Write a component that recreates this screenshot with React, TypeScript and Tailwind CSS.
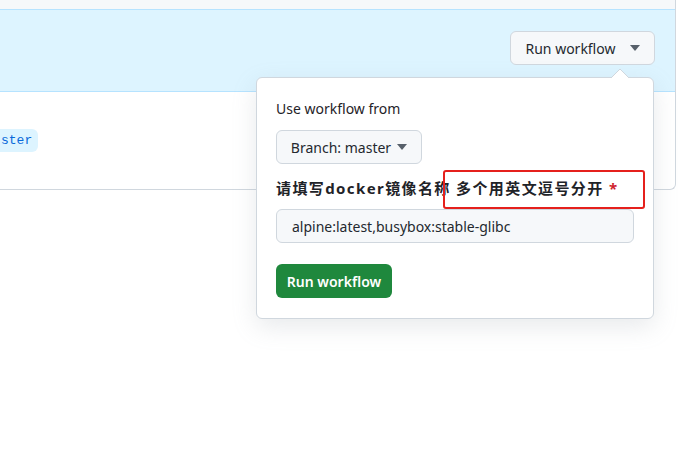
import { useState } from "react";

const font = { fontFamily: '"Noto Sans", "Noto Sans CJK SC", sans-serif' };

function Caret({ className }: { className?: string }) {
  return (
    <svg width="10" height="6" viewBox="0 0 10 6" className={className}>
      <path d="M0 0h10L5 6z" fill="currentColor" />
    </svg>
  );
}

export default function App() {
  const [images, setImages] = useState("alpine:latest,busybox:stable-glibc");

  return (
    <div className="relative w-[686px] h-[453px] bg-white overflow-hidden text-[#1f2328]" style={font}>
      {/* workflow card, left edge runs off screen */}
      <div className="w-[676px] border-r border-b border-[#d0d7de] rounded-br-md">
        <div className="h-[10px] bg-[#f6f8fa] border-b border-[#b6e3ff]" />
        <div className="h-[82px] bg-[#ddf4ff] border-b border-[#b6e3ff] flex justify-end items-start pt-[21px] pr-[20px]">
          <button className="h-[34px] w-[145px] flex items-center justify-center gap-[14px] rounded-md border border-[#d0d7de] bg-[#f6f8fa] text-[14px] text-[#24292f]">
            <span>Run workflow</span>
            <Caret className="text-[#57606a]" />
          </button>
        </div>
        <div className="h-[97px] flex items-start pt-[37px]">
          {/* branch badge, cut by the left edge of the window */}
          <span
            className="rounded-r-md bg-[#ddf4ff] pl-[1px] pr-[6px] h-[23px] flex items-center text-[13px] text-[#0969da]"
            style={{ fontFamily: '"Liberation Mono", monospace' }}
          >
            ster
          </span>
        </div>
      </div>

      {/* dropdown */}
      <svg width="20" height="10" viewBox="0 0 20 10" className="absolute left-[610px] top-[68px] z-20">
        <path d="M1 10L10 1L19 10" fill="white" stroke="#d0d7de" />
      </svg>
      <div className="absolute left-[256px] top-[77px] w-[398px] h-[242px] z-10 rounded-md border border-[#d0d7de] bg-white shadow-[0_8px_24px_rgba(140,149,159,0.2)] px-[19px] pt-[21px]">
        <div className="text-[14px] leading-[20px]">Use workflow from</div>
        <button className="mt-[11px] h-[34px] w-[146px] flex items-center justify-center gap-[6px] rounded-md border border-[#d0d7de] bg-[#f6f8fa] text-[14px] text-[#24292f]">
          <span>Branch: master</span>
          <Caret className="text-[#57606a]" />
        </button>
        <div className="mt-[14px] text-[15px] leading-[20px] font-bold tracking-[1.4px]">
          请填写docker镜像名称 多个用英文逗号分开 <span className="text-[#cf222e]">*</span>
        </div>
        <input
          value={images}
          onChange={(e) => setImages(e.target.value)}
          className="mt-[11px] block h-[34px] w-[358px] rounded-md border border-[#d0d7de] bg-[#f6f8fa] px-[15px] text-[14px] text-[#24292f] outline-none"
        />
        <button className="mt-[21px] h-[34px] w-[116px] rounded-md bg-[#1f883d] text-white text-[14px] font-semibold">
          Run workflow
        </button>
      </div>

      {/* annotation box */}
      <div className="absolute left-[443px] top-[170px] w-[202px] h-[39px] z-30 border-2 border-[#e5201c] rounded-[3px]" />
    </div>
  );
}
